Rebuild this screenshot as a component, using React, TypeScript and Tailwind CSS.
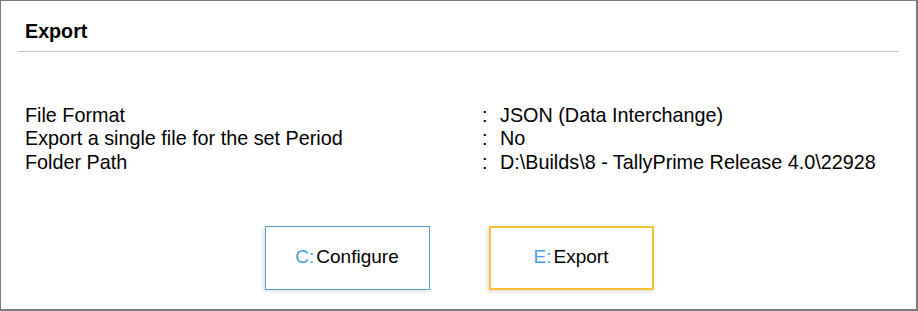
import React from "react";

const rows: [string, string][] = [
  ["File Format", "JSON (Data Interchange)"],
  ["Export a single file for the set Period", "No"],
  ["Folder Path", "D:\\Builds\\8 - TallyPrime Release 4.0\\22928"],
];

const ActionButton: React.FC<{ hotkey: string; label: string; active?: boolean }> = ({
  hotkey,
  label,
  active,
}) => (
  <button
    className={
      active
        ? "w-[165px] h-[64px] bg-white border-2 border-[#fbc130] shadow-[-2px_2px_4px_rgba(0,0,0,0.12)] flex items-center justify-center text-[19px]"
        : "w-[165px] h-[64px] bg-white border border-[#5b9bd5] shadow-[-2px_2px_4px_rgba(0,0,0,0.12)] flex items-center justify-center text-[19px]"
    }
  >
    <span className="text-[#4a9ede]">{hotkey}:</span>
    <span className="ml-[2px] text-black">{label}</span>
  </button>
);

export default function App() {
  return (
    <div
      className="w-[918px] h-[311px] bg-white border-l border-t border-r-2 border-b-2 border-[#7a7a7a] box-border text-black"
      style={{ fontFamily: '"Liberation Sans", Arial, sans-serif' }}
    >
      <div className="pt-[18.5px]">
        <div className="mx-[17px] mr-[18px] border-b border-[#c4c4c4] pb-[8px]">
          <h1 className="pl-[7px] text-[19.7px] font-bold leading-[23.5px]">Export</h1>
        </div>

        <div className="mt-[51.5px] pl-[24px] text-[19.8px] leading-[23.5px]">
          {rows.map(([label, value]) => (
            <div key={label} className="grid grid-cols-[457px_18px_1fr]">
              <span>{label}</span>
              <span>:</span>
              <span>{value}</span>
            </div>
          ))}
        </div>

        <div className="mt-[51.5px] flex justify-center gap-[59px] pl-[1px]">
          <ActionButton hotkey="C" label="Configure" />
          <ActionButton hotkey="E" label="Export" active />
        </div>
      </div>
    </div>
  );
}
